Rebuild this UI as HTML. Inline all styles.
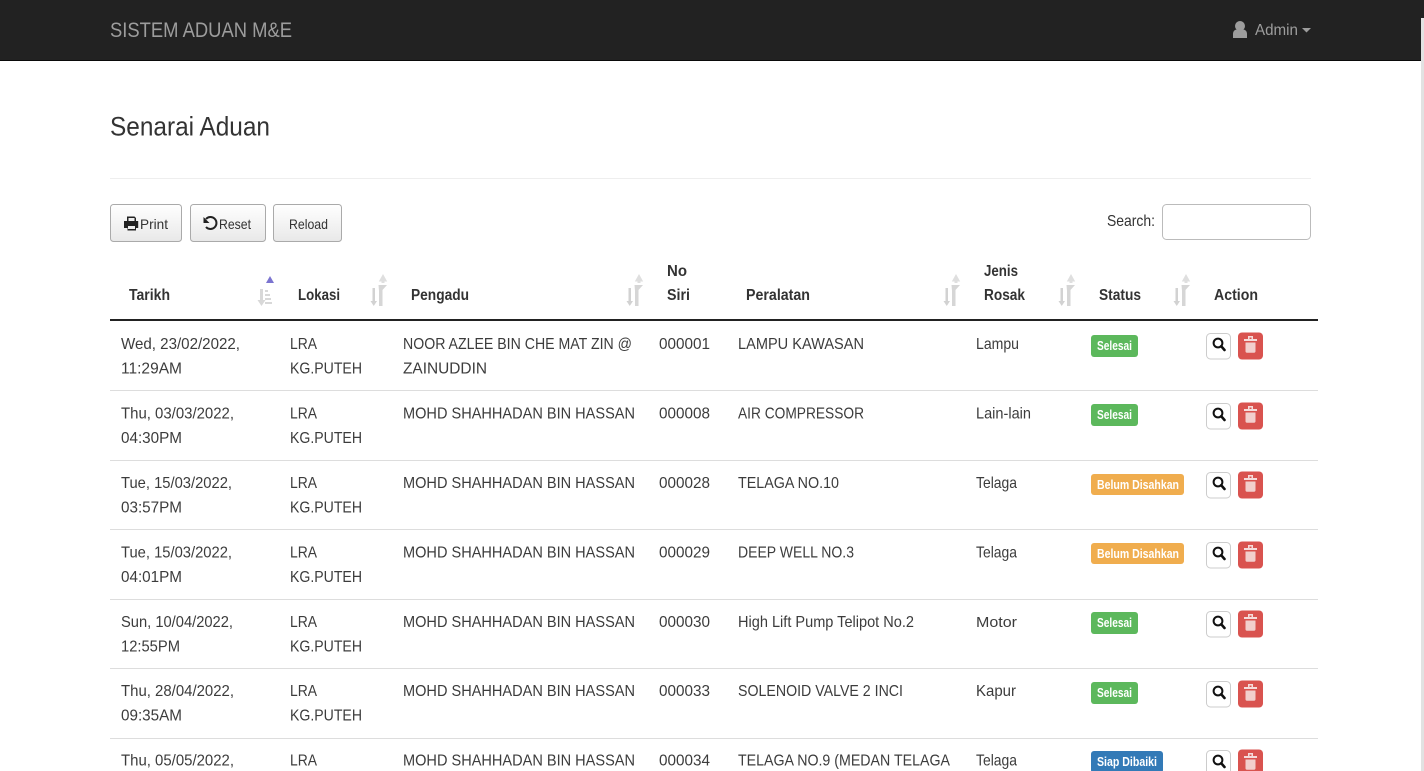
<!DOCTYPE html>
<html><head><meta charset="utf-8"><title>Senarai Aduan</title>
<style>
html,body{margin:0;padding:0;background:#fff;overflow:hidden;width:1424px;height:771px}
svg{display:block;position:absolute;left:0;top:0}
text{font-family:"Liberation Sans",sans-serif;font-size:16px;fill:#333}
.c{fill:#3c3c3c}
.h{font-weight:700;fill:#333}
.b{font-size:13px;font-weight:700;fill:#fff}
.t{font-size:14px;fill:#333}
</style></head><body>
<svg width="1424" height="771" viewBox="0 0 1424 771" xmlns="http://www.w3.org/2000/svg">
<defs>
<g id="act">
<rect x="0.5" y="1.5" width="24" height="25.500" rx="4" fill="#fff" stroke="#ccc"/>
<circle cx="12" cy="11" r="4.400" fill="none" stroke="#111" stroke-width="2"/>
<path d="M15.200 14.200L18.500 18" stroke="#111" stroke-width="2.600" stroke-linecap="round"/>
<rect x="32" y="0.500" width="25" height="27" rx="4" fill="#d9534f"/>
<path d="M38 7h13v2H38zM42 4h5v3h-1.500V5.500h-2V7H42z" fill="#f5dcdb"/>
<path d="M39.500 10.500h10v8.800a1.400 1.400 0 0 1-1.400 1.400h-7.200a1.400 1.400 0 0 1-1.400-1.400z" fill="#f2cfcd"/>
</g>
<g id="sort">
<path d="M14-1l4.200 7.500H15.500V8h-3V6.500H9.800z" fill="#dfdfdf"/>
<path d="M9.500 10H18l-4.500 5v16H10V16z" fill="#d6d6d6"/>
<path d="M3.500 13H6v13h2l-3.250 5L1.500 26h2z" fill="#d2d2d2"/>
</g>
</defs>

<rect x="0" y="0" width="1424" height="60" fill="#222"/>
<rect x="0" y="60" width="1424" height="1" fill="#0a0a0a"/>
<rect x="1421" y="18" width="3" height="753" fill="#e2e2e2"/>
<text x="110" y="37" textLength="182" lengthAdjust="spacingAndGlyphs" style="font-size:21px;fill:#9d9d9d">SISTEM ADUAN M&amp;E</text>
<circle cx="1240" cy="26" r="5" fill="#9d9d9d"/>
<path d="M1233 38v-4c0-3 2-4.500 4-4.500h6c2 0 4 1.500 4 4.500v4z" fill="#9d9d9d"/>
<text x="1255" y="35" textLength="43" lengthAdjust="spacingAndGlyphs" style="fill:#9d9d9d">Admin</text>
<path d="M1302 28h9l-4.500 4.500z" fill="#9d9d9d"/>

<text x="110" y="135.500" textLength="160" lengthAdjust="spacingAndGlyphs" style="font-size:27px;fill:#333">Senarai Aduan</text>
<rect x="110" y="178" width="1201" height="1" fill="#eee"/>

<linearGradient id="g" x1="0" y1="0" x2="0" y2="1"><stop offset="0" stop-color="#fff"/><stop offset="1" stop-color="#e8e8e8"/></linearGradient>
<rect x="110.500" y="204.500" width="71" height="37" rx="3" fill="url(#g)" stroke="#aaa"/>
<rect x="190.500" y="204.500" width="75" height="37" rx="3" fill="url(#g)" stroke="#aaa"/>
<rect x="273.500" y="204.500" width="68" height="37" rx="3" fill="url(#g)" stroke="#aaa"/>
<path d="M127 216.500h7.500l1.500 1.500v3h2.200v7h-2.200v2.500h-8.500V228H124v-7h3z" fill="#222"/>
<rect x="128.500" y="218" width="6" height="3" fill="#eee"/><rect x="128" y="226" width="7" height="3" fill="#eee"/>
<text class="t" x="140" y="229" textLength="28" lengthAdjust="spacingAndGlyphs">Print</text>
<path d="M206 219a6 6 0 1 1 0 8" fill="none" stroke="#222" stroke-width="2"/><path d="M203.500 217v6h6z" fill="#222"/>
<text class="t" x="219" y="229" textLength="32" lengthAdjust="spacingAndGlyphs">Reset</text>
<text class="t" x="289" y="229" textLength="39" lengthAdjust="spacingAndGlyphs">Reload</text>

<text x="1107" y="226" textLength="48" lengthAdjust="spacingAndGlyphs">Search:</text>
<rect x="1162.500" y="204.500" width="148" height="35" rx="4" fill="#fff" stroke="#bbb"/>

<text class="h" x="129" y="300" textLength="41" lengthAdjust="spacingAndGlyphs">Tarikh</text>
<text class="h" x="298" y="300" textLength="42" lengthAdjust="spacingAndGlyphs">Lokasi</text>
<text class="h" x="411" y="300" textLength="58" lengthAdjust="spacingAndGlyphs">Pengadu</text>
<text class="h" x="667" y="276" textLength="20" lengthAdjust="spacingAndGlyphs">No</text>
<text class="h" x="667" y="300" textLength="23" lengthAdjust="spacingAndGlyphs">Siri</text>
<text class="h" x="746" y="300" textLength="64" lengthAdjust="spacingAndGlyphs">Peralatan</text>
<text class="h" x="984" y="276" textLength="34" lengthAdjust="spacingAndGlyphs">Jenis</text>
<text class="h" x="984" y="300" textLength="41" lengthAdjust="spacingAndGlyphs">Rosak</text>
<text class="h" x="1099" y="300" textLength="42" lengthAdjust="spacingAndGlyphs">Status</text>
<text class="h" x="1214" y="300" textLength="44" lengthAdjust="spacingAndGlyphs">Action</text>

<path d="M266 283l4-7 4 7z" fill="#7b74d0"/>
<path d="M260 289h3v11h2.500l-4 6-4-6H260z" fill="#d8d8d8"/>
<path d="M265 290h3v2h-3zM265 294h5v2h-5zM265 298h6v2h-6zM265 302h7v2h-7z" fill="#d8d8d8"/>
<use href="#sort" x="369" y="275"/>
<use href="#sort" x="625" y="275"/>
<use href="#sort" x="942" y="275"/>
<use href="#sort" x="1057" y="275"/>
<use href="#sort" x="1172" y="275"/>

<rect x="110" y="319" width="1208" height="2" fill="#222"/>
<g fill="#ddd">
<rect x="110" y="390" width="1208" height="1"/>
<rect x="110" y="460" width="1208" height="1"/>
<rect x="110" y="529" width="1208" height="1"/>
<rect x="110" y="599" width="1208" height="1"/>
<rect x="110" y="668" width="1208" height="1"/>
<rect x="110" y="738" width="1208" height="1"/>
</g>

<!-- row 1 -->
<text class="c" x="121" y="349" textLength="119" lengthAdjust="spacingAndGlyphs">Wed, 23/02/2022,</text>
<text class="c" x="121" y="373.500" textLength="61" lengthAdjust="spacingAndGlyphs">11:29AM</text>
<text class="c" x="290" y="349" textLength="27" lengthAdjust="spacingAndGlyphs">LRA</text>
<text class="c" x="290" y="373.500" textLength="72" lengthAdjust="spacingAndGlyphs">KG.PUTEH</text>
<text class="c" x="403" y="349" textLength="229" lengthAdjust="spacingAndGlyphs">NOOR AZLEE BIN CHE MAT ZIN @</text>
<text class="c" x="403" y="373.500" textLength="84" lengthAdjust="spacingAndGlyphs">ZAINUDDIN</text>
<text class="c" x="659" y="349" textLength="51" lengthAdjust="spacingAndGlyphs">000001</text>
<text class="c" x="738" y="349" textLength="126" lengthAdjust="spacingAndGlyphs">LAMPU KAWASAN</text>
<text class="c" x="976" y="349" textLength="43" lengthAdjust="spacingAndGlyphs">Lampu</text>
<rect x="1091" y="335" width="47" height="22" rx="3" fill="#5cb85c"/>
<text class="b" x="1097" y="350" textLength="35" lengthAdjust="spacingAndGlyphs">Selesai</text>
<use href="#act" x="1206" y="332"/>

<!-- row 2 -->
<text class="c" x="121" y="418.500" textLength="113" lengthAdjust="spacingAndGlyphs">Thu, 03/03/2022,</text>
<text class="c" x="121" y="443" textLength="61" lengthAdjust="spacingAndGlyphs">04:30PM</text>
<text class="c" x="290" y="418.500" textLength="27" lengthAdjust="spacingAndGlyphs">LRA</text>
<text class="c" x="290" y="443" textLength="72" lengthAdjust="spacingAndGlyphs">KG.PUTEH</text>
<text class="c" x="403" y="418.500" textLength="232" lengthAdjust="spacingAndGlyphs">MOHD SHAHHADAN BIN HASSAN</text>
<text class="c" x="659" y="418.500" textLength="51" lengthAdjust="spacingAndGlyphs">000008</text>
<text class="c" x="738" y="418.500" textLength="126" lengthAdjust="spacingAndGlyphs">AIR COMPRESSOR</text>
<text class="c" x="976" y="418.500" textLength="55" lengthAdjust="spacingAndGlyphs">Lain-lain</text>
<rect x="1091" y="404" width="47" height="22" rx="3" fill="#5cb85c"/>
<text class="b" x="1097" y="419" textLength="35" lengthAdjust="spacingAndGlyphs">Selesai</text>
<use href="#act" x="1206" y="402"/>

<!-- row 3 -->
<text class="c" x="121" y="488" textLength="111" lengthAdjust="spacingAndGlyphs">Tue, 15/03/2022,</text>
<text class="c" x="121" y="512.500" textLength="61" lengthAdjust="spacingAndGlyphs">03:57PM</text>
<text class="c" x="290" y="488" textLength="27" lengthAdjust="spacingAndGlyphs">LRA</text>
<text class="c" x="290" y="512.500" textLength="72" lengthAdjust="spacingAndGlyphs">KG.PUTEH</text>
<text class="c" x="403" y="488" textLength="232" lengthAdjust="spacingAndGlyphs">MOHD SHAHHADAN BIN HASSAN</text>
<text class="c" x="659" y="488" textLength="51" lengthAdjust="spacingAndGlyphs">000028</text>
<text class="c" x="738" y="488" textLength="101" lengthAdjust="spacingAndGlyphs">TELAGA NO.10</text>
<text class="c" x="976" y="488" textLength="41" lengthAdjust="spacingAndGlyphs">Telaga</text>
<rect x="1091" y="474" width="93" height="21" rx="3" fill="#f0ad4e"/>
<text class="b" x="1097" y="489" textLength="82" lengthAdjust="spacingAndGlyphs">Belum Disahkan</text>
<use href="#act" x="1206" y="471"/>

<!-- row 4 -->
<text class="c" x="121" y="557.500" textLength="111" lengthAdjust="spacingAndGlyphs">Tue, 15/03/2022,</text>
<text class="c" x="121" y="582" textLength="61" lengthAdjust="spacingAndGlyphs">04:01PM</text>
<text class="c" x="290" y="557.500" textLength="27" lengthAdjust="spacingAndGlyphs">LRA</text>
<text class="c" x="290" y="582" textLength="72" lengthAdjust="spacingAndGlyphs">KG.PUTEH</text>
<text class="c" x="403" y="557.500" textLength="232" lengthAdjust="spacingAndGlyphs">MOHD SHAHHADAN BIN HASSAN</text>
<text class="c" x="659" y="557.500" textLength="51" lengthAdjust="spacingAndGlyphs">000029</text>
<text class="c" x="738" y="557.500" textLength="116" lengthAdjust="spacingAndGlyphs">DEEP WELL NO.3</text>
<text class="c" x="976" y="557.500" textLength="41" lengthAdjust="spacingAndGlyphs">Telaga</text>
<rect x="1091" y="543" width="93" height="21" rx="3" fill="#f0ad4e"/>
<text class="b" x="1097" y="558" textLength="82" lengthAdjust="spacingAndGlyphs">Belum Disahkan</text>
<use href="#act" x="1206" y="541"/>

<!-- row 5 -->
<text class="c" x="121" y="627" textLength="112" lengthAdjust="spacingAndGlyphs">Sun, 10/04/2022,</text>
<text class="c" x="121" y="651.500" textLength="59" lengthAdjust="spacingAndGlyphs">12:55PM</text>
<text class="c" x="290" y="627" textLength="27" lengthAdjust="spacingAndGlyphs">LRA</text>
<text class="c" x="290" y="651.500" textLength="72" lengthAdjust="spacingAndGlyphs">KG.PUTEH</text>
<text class="c" x="403" y="627" textLength="232" lengthAdjust="spacingAndGlyphs">MOHD SHAHHADAN BIN HASSAN</text>
<text class="c" x="659" y="627" textLength="51" lengthAdjust="spacingAndGlyphs">000030</text>
<text class="c" x="738" y="627" textLength="176" lengthAdjust="spacingAndGlyphs">High Lift Pump Telipot No.2</text>
<text class="c" x="976" y="627" textLength="41" lengthAdjust="spacingAndGlyphs" style="font-size:15px">Motor</text>
<rect x="1091" y="612" width="47" height="22" rx="3" fill="#5cb85c"/>
<text class="b" x="1097" y="627" textLength="35" lengthAdjust="spacingAndGlyphs">Selesai</text>
<use href="#act" x="1206" y="610"/>

<!-- row 6 -->
<text class="c" x="121" y="696" textLength="113" lengthAdjust="spacingAndGlyphs">Thu, 28/04/2022,</text>
<text class="c" x="121" y="720.500" textLength="61" lengthAdjust="spacingAndGlyphs">09:35AM</text>
<text class="c" x="290" y="696" textLength="27" lengthAdjust="spacingAndGlyphs">LRA</text>
<text class="c" x="290" y="720.500" textLength="72" lengthAdjust="spacingAndGlyphs">KG.PUTEH</text>
<text class="c" x="403" y="696" textLength="232" lengthAdjust="spacingAndGlyphs">MOHD SHAHHADAN BIN HASSAN</text>
<text class="c" x="659" y="696" textLength="51" lengthAdjust="spacingAndGlyphs">000033</text>
<text class="c" x="738" y="696" textLength="165" lengthAdjust="spacingAndGlyphs">SOLENOID VALVE 2 INCI</text>
<text class="c" x="976" y="696" textLength="40" lengthAdjust="spacingAndGlyphs">Kapur</text>
<rect x="1091" y="682" width="47" height="22" rx="3" fill="#5cb85c"/>
<text class="b" x="1097" y="697" textLength="35" lengthAdjust="spacingAndGlyphs">Selesai</text>
<use href="#act" x="1206" y="680"/>

<!-- row 7 -->
<text class="c" x="121" y="765.500" textLength="113" lengthAdjust="spacingAndGlyphs">Thu, 05/05/2022,</text>
<text class="c" x="290" y="765.500" textLength="27" lengthAdjust="spacingAndGlyphs">LRA</text>
<text class="c" x="403" y="765.500" textLength="232" lengthAdjust="spacingAndGlyphs">MOHD SHAHHADAN BIN HASSAN</text>
<text class="c" x="659" y="765.500" textLength="51" lengthAdjust="spacingAndGlyphs">000034</text>
<text class="c" x="738" y="765.500" textLength="212" lengthAdjust="spacingAndGlyphs">TELAGA NO.9 (MEDAN TELAGA</text>
<text class="c" x="976" y="765.500" textLength="41" lengthAdjust="spacingAndGlyphs">Telaga</text>
<rect x="1091" y="751" width="72" height="22" rx="3" fill="#337ab7"/>
<text class="b" x="1097" y="766" textLength="60" lengthAdjust="spacingAndGlyphs">Siap Dibaiki</text>
<use href="#act" x="1206" y="749"/>
</svg>
</body></html>
